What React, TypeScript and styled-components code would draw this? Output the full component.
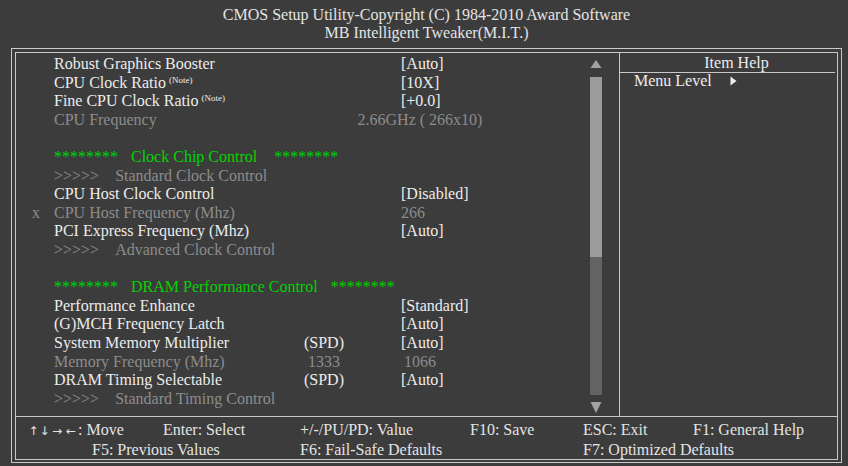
import React from "react";
import styled, { createGlobalStyle } from "styled-components";

const GlobalStyle = createGlobalStyle`
  html, body {
    margin: 0;
    padding: 0;
    background: #3c3c3c;
  }
  body {
    font-family: "Liberation Serif", "Times New Roman", serif;
    font-size: 16px;
    color: #ececec;
  }
`;

const LINE = "#c8c8c8";
const WHITE = "#ececec";
const DIM = "#8c8c8c";
const GREEN = "#00d400";

const Screen = styled.div`
  width: 848px;
  height: 466px;
  background: #3c3c3c;
  overflow: hidden;
`;

const Title = styled.header`
  width: 831px;
  margin-left: 11px;
  padding-top: 6px;
  text-align: center;
  line-height: 18px;
  color: #e4e4e4;
`;

const Frame = styled.div`
  box-sizing: border-box;
  width: 831px;
  margin: 6px 0 0 11px;
  border: 1px solid ${LINE};
  padding: 3px 3px 2px 3px;
`;

const Inner = styled.div`
  border: 1px solid ${LINE};
`;

const Main = styled.div`
  display: flex;
  height: 363px;
`;

const ListArea = styled.div`
  flex: 1;
  display: flex;
`;

const Rows = styled.div`
  flex: 1;
  padding-top: 2px;
`;

const Row = styled.div`
  display: grid;
  grid-template-columns: 38px 226px 88px 104px;
  height: 18.6px;
  line-height: 18.6px;
  white-space: pre;
`;

const Marker = styled.span<{ $dim?: boolean }>`
  padding-left: 16px;
  color: ${(p) => (p.$dim ? DIM : WHITE)};
`;

const Label = styled.span<{ $dim?: boolean }>`
  color: ${(p) => (p.$dim ? DIM : WHITE)};
`;

const Note = styled.sup`
  font-size: 9px;
  margin-left: 3px;
  vertical-align: 5px;
  line-height: 0;
`;

const Mid = styled.span<{ $dim?: boolean }>`
  text-align: center;
  color: ${(p) => (p.$dim ? DIM : WHITE)};
`;

const Value = styled.span<{ $dim?: boolean; $centered?: boolean }>`
  display: flex;
  justify-content: ${(p) => (p.$centered ? "center" : "flex-start")};
  padding-left: ${(p) => (p.$centered ? "0" : "33px")};
  color: ${(p) => (p.$dim ? DIM : WHITE)};
`;

const Wide = styled.span`
  grid-column: 2 / span 3;
  display: flex;
`;

const Section = styled(Wide)<{ $tail: number }>`
  color: ${GREEN};
  span + span {
    margin-left: 13px;
  }
  span:last-child {
    margin-left: ${(p) => p.$tail}px;
  }
`;

const Sub = styled(Wide)`
  color: ${DIM};
  span + span {
    margin-left: 16px;
  }
`;

const Scroll = styled.div`
  width: 12px;
  margin-right: 17px;
  padding-top: 7px;
  display: flex;
  flex-direction: column;
`;

const Track = styled.div`
  height: 318px;
  margin: 8px 0 7px;
  background: #646464;
`;

const Thumb = styled.div`
  height: 180px;
  background: #9c9c9f;
`;

const Help = styled.aside`
  width: 217px;
  border-left: 1px solid ${LINE};
`;

const HelpHead = styled.div`
  height: 19px;
  line-height: 19px;
  margin-right: 2px;
  padding-left: 18px;
  text-align: center;
  border-bottom: 1px solid ${LINE};
`;

const HelpLine = styled.div`
  display: flex;
  align-items: center;
  line-height: 16px;
  padding-left: 14px;
  svg {
    margin-left: 18px;
  }
`;

const Footer = styled.footer`
  display: grid;
  grid-template-columns: 135px 137px 170px 113px 110px 1fr;
  height: 43px;
  box-sizing: border-box;
  padding: 4px 0 0 12px;
  border-top: 1px solid ${LINE};
  line-height: 18.3px;
  white-space: nowrap;
  color: #e4e4e4;
`;

const Key = styled.span<{ $col: string; $indent?: number }>`
  grid-column: ${(p) => p.$col};
  padding-left: ${(p) => p.$indent ?? 0}px;
`;

const ArrowGlyph = styled.span<{ $w: number }>`
  display: inline-block;
  width: ${(p) => p.$w}px;
  text-align: center;
  font-family: "DejaVu Sans", sans-serif;
  font-size: 12px;
`;

type Item =
  | {
      kind: "item";
      label: string;
      note?: boolean;
      marker?: string;
      mid?: string;
      value?: string;
      dim?: boolean;
      centered?: boolean;
    }
  | { kind: "section"; title: string; tail: number }
  | { kind: "sub"; title: string }
  | { kind: "blank" };

const items: Item[] = [
  { kind: "item", label: "Robust Graphics Booster", value: "[Auto]" },
  { kind: "item", label: "CPU Clock Ratio", note: true, value: "[10X]" },
  { kind: "item", label: "Fine CPU Clock Ratio", note: true, value: "[+0.0]" },
  { kind: "item", label: "CPU Frequency", value: "2.66GHz ( 266x10)", dim: true, centered: true },
  { kind: "blank" },
  { kind: "section", title: "Clock Chip Control", tail: 17 },
  { kind: "sub", title: "Standard Clock Control" },
  { kind: "item", label: "CPU Host Clock Control", value: "[Disabled]" },
  { kind: "item", label: "CPU Host Frequency (Mhz)", marker: "x", value: "266", dim: true },
  { kind: "item", label: "PCI Express Frequency (Mhz)", value: "[Auto]" },
  { kind: "sub", title: "Advanced Clock Control" },
  { kind: "blank" },
  { kind: "section", title: "DRAM Performance Control", tail: 13 },
  { kind: "item", label: "Performance Enhance", value: "[Standard]" },
  { kind: "item", label: "(G)MCH Frequency Latch", value: "[Auto]" },
  { kind: "item", label: "System Memory Multiplier", mid: "(SPD)", value: "[Auto]" },
  { kind: "item", label: "Memory Frequency (Mhz)", mid: "1333", value: "1066", dim: true, centered: true },
  { kind: "item", label: "DRAM Timing Selectable", mid: "(SPD)", value: "[Auto]" },
  { kind: "sub", title: "Standard Timing Control" },
];

const keyArrows: [string, number][] = [
  ["↑", 11],
  ["↓", 11],
  ["→", 14],
  ["←", 14],
];

const Arrow = ({ down }: { down?: boolean }) => (
  <svg width="12" height={down ? 11 : 9} viewBox="0 0 12 10" preserveAspectRatio="none">
    <polygon points={down ? "0.5,0 11.5,0 6,10" : "6,0 11.5,9 0.5,9"} fill="#a2a2a6" />
  </svg>
);

const renderItem = (it: Item, i: number) => {
  if (it.kind === "blank") return <Row key={i} />;
  if (it.kind === "section")
    return (
      <Row key={i}>
        <span />
        <Section $tail={it.tail}>
          <span>********</span>
          <span>{it.title}</span>
          <span>********</span>
        </Section>
      </Row>
    );
  if (it.kind === "sub")
    return (
      <Row key={i}>
        <span />
        <Sub>
          <span>&gt;&gt;&gt;&gt;&gt;</span>
          <span>{it.title}</span>
        </Sub>
      </Row>
    );
  return (
    <Row key={i}>
      <Marker $dim>{it.marker ?? ""}</Marker>
      <Label $dim={it.dim}>
        {it.label}
        {it.note && <Note>(Note)</Note>}
      </Label>
      <Mid $dim={it.dim}>{it.mid ?? ""}</Mid>
      <Value $dim={it.dim} $centered={it.centered}>
        {it.value ?? ""}
      </Value>
    </Row>
  );
};

const App = () => {
  return (
    <Screen>
      <GlobalStyle />
      <Title>
        <div>CMOS Setup Utility-Copyright (C) 1984-2010 Award Software</div>
        <div>MB Intelligent Tweaker(M.I.T.)</div>
      </Title>
      <Frame>
        <Inner>
          <Main>
            <ListArea>
              <Rows>{items.map(renderItem)}</Rows>
              <Scroll>
                <Arrow />
                <Track>
                  <Thumb />
                </Track>
                <Arrow down />
              </Scroll>
            </ListArea>
            <Help>
              <HelpHead>Item Help</HelpHead>
              <HelpLine>
                Menu Level
                <svg width="7" height="10" viewBox="0 0 7 10">
                  <polygon points="0.5,0.5 6.5,5 0.5,9.5" fill={WHITE} />
                </svg>
              </HelpLine>
            </Help>
          </Main>
          <Footer>
            <Key $col="1">
              {keyArrows.map(([a, w]) => (
                <ArrowGlyph key={a} $w={w}>
                  {a}
                </ArrowGlyph>
              ))}
              : Move
            </Key>
            <Key $col="2">Enter: Select</Key>
            <Key $col="3">+/-/PU/PD: Value</Key>
            <Key $col="4">F10: Save</Key>
            <Key $col="5">ESC: Exit</Key>
            <Key $col="6">F1: General Help</Key>
            <Key $col="1 / span 2" $indent={64}>F5: Previous Values</Key>
            <Key $col="3 / span 2">F6: Fail-Safe Defaults</Key>
            <Key $col="5 / span 2">F7: Optimized Defaults</Key>
          </Footer>
        </Inner>
      </Frame>
    </Screen>
  );
};

export default App;
